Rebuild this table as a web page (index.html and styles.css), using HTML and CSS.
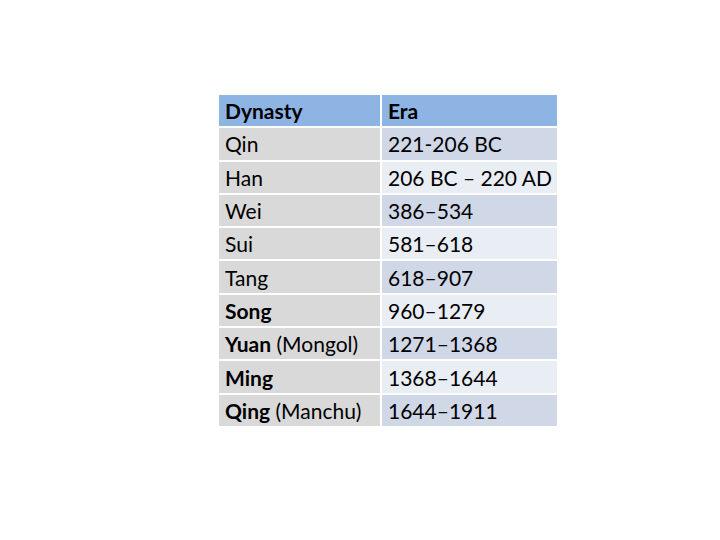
FILE: index.html
```html
<!DOCTYPE html>
<html>
<head>
<meta charset="utf-8">
<link rel="stylesheet" href="styles.css">
</head>
<body>
<div class="page">
  <div class="table">
    <div class="cell head"><span>Dynasty</span></div><div class="cell head"><span>Era</span></div>
    <div class="cell name"><span>Qin</span></div><div class="cell era dark"><span>221-206 BC</span></div>
    <div class="cell name"><span>Han</span></div><div class="cell era light"><span>206 BC – 220 AD</span></div>
    <div class="cell name"><span>Wei</span></div><div class="cell era dark"><span>386–534</span></div>
    <div class="cell name"><span>Sui</span></div><div class="cell era light"><span>581–618</span></div>
    <div class="cell name"><span>Tang</span></div><div class="cell era dark"><span>618–907</span></div>
    <div class="cell name"><span><b>Song</b></span></div><div class="cell era light"><span>960–1279</span></div>
    <div class="cell name"><span><b>Yuan</b> (Mongol)</span></div><div class="cell era dark"><span>1271–1368</span></div>
    <div class="cell name"><span><b>Ming</b></span></div><div class="cell era light"><span>1368–1644</span></div>
    <div class="cell name"><span><b>Qing</b> (Manchu)</span></div><div class="cell era dark"><span>1644–1911</span></div>
  </div>
</div>
</body>
</html>
```
FILE: styles.css
```css
html, body {
  margin: 0;
  padding: 0;
  background: #ffffff;
}
.page {
  width: 720px;
  height: 540px;
  padding: 95px 0 0 219px;
  box-sizing: border-box;
}
.table {
  display: grid;
  grid-template-columns: 161px 175px;
  grid-template-rows: repeat(10, 1fr);
  column-gap: 2px;
  row-gap: 2px;
  width: 338px;
  height: 331px;
  font-family: Lato, "Open Sans", sans-serif;
  font-size: 21px;
  color: #000;
}
.cell {
  display: flex;
  align-items: center;
  padding-left: 6px;
  white-space: nowrap;
}
.head {
  background: #8eb4e3;
  font-weight: bold;
}
.name {
  background: #d9d9d9;
}
.dark {
  background: #d0d8e8;
}
.light {
  background: #e9edf4;
}
b {
  font-weight: bold;
}
```
